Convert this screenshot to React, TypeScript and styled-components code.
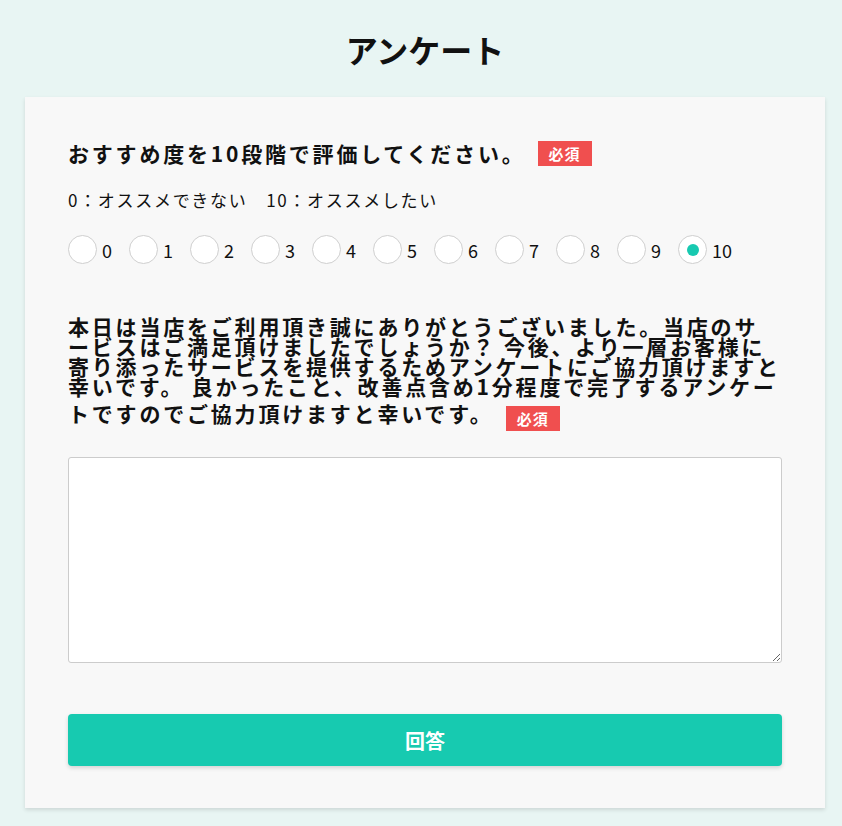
import React, { useState } from "react";
import styled, { createGlobalStyle } from "styled-components";

const GlobalStyle = createGlobalStyle`
  body {
    margin: 0;
    background: #e8f5f3;
    font-family: "Noto Sans CJK JP", "Noto Sans", sans-serif;
    color: #111;
  }
`;

const Page = styled.div`
  padding: 0 17px 18px 25px;
`;

const Title = styled.h1`
  margin: 0;
  height: 97px;
  display: flex;
  align-items: center;
  justify-content: center;
  font-size: 32px;
  font-weight: 700;
`;

const Card = styled.form`
  background: #f8f8f8;
  box-shadow: 0 2px 4px rgba(0, 0, 0, 0.12);
  padding: 43px 43px 42px;
  display: flex;
  flex-direction: column;
`;

const Question = styled.div`
  font-size: 21px;
  font-weight: 700;
  line-height: 26px;
  letter-spacing: 2.8px;
  line-break: loose;
`;

const Badge = styled.span<{ $pushed?: boolean }>`
  display: inline-block;
  margin-left: 12px;
  margin-top: ${(p) => (p.$pushed ? "10px" : "0")};
  padding: 0 11px;
  height: 25px;
  line-height: 25px;
  background: #f04f4f;
  color: #fff;
  font-size: 15px;
  font-weight: 700;
  letter-spacing: 1px;
  vertical-align: ${(p) => (p.$pushed ? "-3px" : "2px")};
`;

const Hint = styled.p`
  margin: 21px 0 0;
  font-size: 17px;
  letter-spacing: 1.7px;
  line-height: 26px;
`;

const Scale = styled.div`
  margin-top: 22px;
  display: flex;
  align-items: center;
`;

const Option = styled.label`
  display: flex;
  align-items: center;
  margin-right: 17px;
  font-size: 18px;
  cursor: pointer;
`;

const Circle = styled.span<{ $on: boolean }>`
  width: 29px;
  height: 29px;
  box-sizing: border-box;
  border: 1px solid #cfcfcf;
  border-radius: 50%;
  background: #fff;
  display: flex;
  align-items: center;
  justify-content: center;
  margin-right: 5px;
  &::after {
    content: "";
    width: 12px;
    height: 12px;
    border-radius: 50%;
    background: ${(p) => (p.$on ? "#17c9b0" : "transparent")};
  }
`;

const HiddenRadio = styled.input`
  display: none;
`;

const Message = styled(Question)`
  margin-top: 52px;
  line-height: 20px;
`;

const Comment = styled.textarea`
  margin-top: 26px;
  height: 206px;
  box-sizing: border-box;
  border: 1px solid #cccccc;
  border-radius: 3px;
  background: #fff;
  font-family: inherit;
  font-size: 16px;
  padding: 8px;
`;

const Submit = styled.button`
  margin-top: 51px;
  height: 52px;
  border: none;
  border-radius: 4px;
  background: #17cab0;
  color: #fff;
  font-family: inherit;
  font-size: 20px;
  font-weight: 700;
  box-shadow: 0 2px 4px rgba(0, 0, 0, 0.15);
  cursor: pointer;
`;

// line breaks as they fall in the original layout
const messageLines = [
  "本日は当店をご利用頂き誠にありがとうございました。当店のサ",
  "ービスはご満足頂けましたでしょうか？ 今後、より一層お客様に",
  "寄り添ったサービスを提供するためアンケートにご協力頂けますと",
  "幸いです。 良かったこと、改善点含め1分程度で完了するアンケー",
  "トですのでご協力頂けますと幸いです。",
];

const App: React.FC = () => {
  const [score, setScore] = useState(10);
  const [text, setText] = useState("");

  return (
    <Page>
      <GlobalStyle />
      <Title>アンケート</Title>
      <Card onSubmit={(e) => e.preventDefault()}>
        <Question>
          おすすめ度を10段階で評価してください。
          <Badge>必須</Badge>
        </Question>
        <Hint>0：オススメできない　10：オススメしたい</Hint>
        <Scale>
          {Array.from({ length: 11 }, (_, i) => (
            <Option key={i}>
              <HiddenRadio
                type="radio"
                name="score"
                checked={score === i}
                onChange={() => setScore(i)}
              />
              <Circle $on={score === i} />
              {i}
            </Option>
          ))}
        </Scale>
        <Message>
          {messageLines.map((line, i) => (
            <React.Fragment key={i}>
              {i > 0 && <br />}
              {line}
            </React.Fragment>
          ))}
          <Badge $pushed>必須</Badge>
        </Message>
        <Comment value={text} onChange={(e) => setText(e.target.value)} />
        <Submit type="submit">回答</Submit>
      </Card>
    </Page>
  );
};

export default App;
